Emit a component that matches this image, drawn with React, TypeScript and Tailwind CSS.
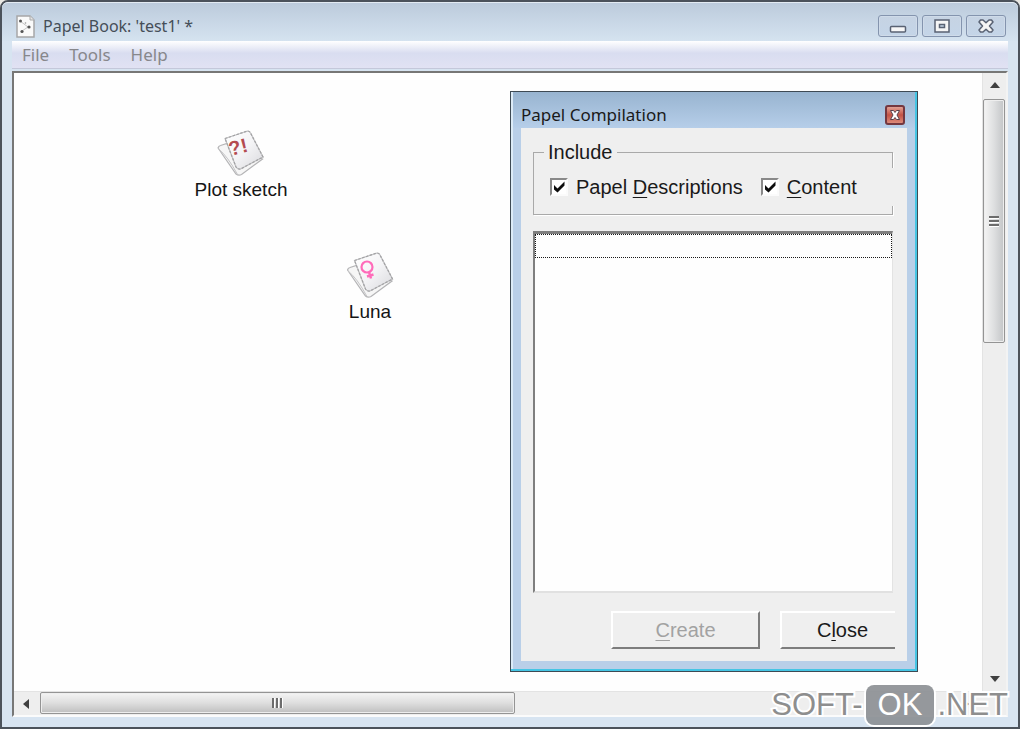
import { useState, type ReactNode } from "react";

function Papel({ label, children, place }: { label: string; children: ReactNode; place: string }) {
  return (
    <button type="button" className={`absolute flex -translate-x-1/2 flex-col items-center ${place}`}>
      <svg width="48" height="48" viewBox="0 0 48 48" aria-hidden="true">
        <defs>
          <linearGradient id={`paper-${label.length}`} x1="0" y1="0" x2="1" y2="1">
            <stop offset="0" stopColor="#ffffff" />
            <stop offset="0.5" stopColor="#f4f4f6" />
            <stop offset="1" stopColor="#d9d9dd" />
          </linearGradient>
        </defs>
        <path d="M1.500 18 Q2 16 4 15.500 L12 13 L44 28 L46 29 L25 44.500 Q22 46 19.500 44 Z" fill="#f6f6f6" stroke="#b4b4b6" strokeWidth="1.200" />
        <path d="M2 19 Q11 26 21 44.500" fill="none" stroke="#c4c4c6" strokeWidth="1" />
        <path d="M8.500 8.500 L31 1 Q33 1 34 3 L46.500 27 L24 39 Q21 39.500 19.500 37 Z" fill={`url(#paper-${label.length})`} stroke="#c2c2c4" strokeWidth="1.200" />
        <path d="M8.500 8.500 L31 1 Q33 1 34 3 L46.500 27 L24 39 Q21 39.500 19.500 37 Z" fill="none" stroke="#a2a2a4" strokeWidth="1.200" strokeDasharray="2.500 1.500" />
        {children}
      </svg>
      <span className="text-[19px] leading-6 whitespace-nowrap text-[#151515]">{label}</span>
    </button>
  );
}

function Key({ children }: { children: string }) {
  return <u className="decoration-1 underline-offset-3">{children}</u>;
}

function Check({ checked, onChange, children }: { checked: boolean; onChange: () => void; children: ReactNode }) {
  return (
    <label className="flex items-center gap-2">
      <span className="relative flex">
        <input
          type="checkbox"
          checked={checked}
          onChange={onChange}
          className="size-[18px] appearance-none border-2 border-t-[#898989] border-r-[#fbfbfb] border-b-[#fbfbfb] border-l-[#898989] bg-white"
        />
        {checked && (
          <svg className="pointer-events-none absolute inset-0" width="18" height="18" viewBox="0 0 18 18" aria-hidden="true">
            <path d="M4 7 L7.500 10.500 L14.500 3.500 V7.500 L7.500 14.500 L4 11.500 Z" fill="#0c0c0c" />
          </svg>
        )}
      </span>
      <span className="text-xl leading-6 whitespace-nowrap">{children}</span>
    </label>
  );
}

function Arrow({ name, points }: { name: string; points: string }) {
  return (
    <button type="button" aria-label={name} className="flex size-6 shrink-0 items-center justify-center">
      <svg width="10" height="10" viewBox="0 0 10 10" aria-hidden="true">
        <polygon points={points} fill="#404040" />
      </svg>
    </button>
  );
}

const caption = "flex h-[22px] w-10 items-center justify-center rounded-[3px] border border-[#8494ae] bg-linear-to-b from-[#c6d3e3] to-[#c4d5e8] shadow-[inset_0_0_0_1px_#cfdbe9]";

export default function App() {
  const [descriptions, setDescriptions] = useState(true);
  const [content, setContent] = useState(true);

  return (
    <div className="h-screen bg-[#e9e8e4] font-['Liberation_Sans',Arial,sans-serif] text-[#1a1a1a]">
      <div className="relative flex h-full flex-col rounded-t-lg border-2 border-[#4b525b] bg-[#d7e4f1] px-2.5 pb-2.5">
        <header className="-mx-2.5 flex h-[39px] shrink-0 items-center justify-between rounded-t-md border-t border-[#e3ebf3] bg-linear-to-b from-[#bccbdc] to-[#d5e3f0] pt-2 pr-3 pl-3.5">
          <div className="flex items-center gap-2">
            <svg width="19" height="23" viewBox="0 0 19 23" aria-hidden="true">
              <path d="M1 1 H14 L18 5 V22 H1 Z" fill="#fafafa" stroke="#a6a7a8" strokeWidth="1.500" />
              <path d="M14 1 V5 H18" fill="#e5e5e5" stroke="#aaa" />
              <path d="M4 6 L12 12 L6 16" fill="none" stroke="#c5c5c5" />
              <g fill="#555"><circle cx="4.500" cy="6" r="1.500" /><circle cx="13" cy="12" r="1.600" /><circle cx="6" cy="16.500" r="1.600" /></g>
              <circle cx="9.500" cy="8" r="0.800" fill="#999" />
            </svg>
            <h1 className="font-['Noto_Sans',sans-serif] text-base leading-6 text-[#454e58]">Papel Book: 'test1' *</h1>
          </div>
          <div className="flex gap-1">
            <button type="button" aria-label="Minimize" className={caption}>
              <svg width="18" height="16" viewBox="0 0 18 16"><rect x="1.500" y="8.500" width="15" height="5.500" rx="1" fill="#f7f7f7" stroke="#596273" strokeWidth="1.500" /></svg>
            </button>
            <button type="button" aria-label="Maximize" className={caption}>
              <svg width="18" height="16" viewBox="0 0 18 16"><path d="M2 2 H16 V14 H2 Z M6.500 6.500 V9.500 H11.500 V6.500 Z" fillRule="evenodd" fill="#f5f5f5" stroke="#596273" strokeWidth="1.500" /></svg>
            </button>
            <button type="button" aria-label="Close window" className={caption}>
              <svg width="18" height="16" viewBox="0 0 18 16"><path d="M3.500 2 H6 L9 4.800 L12 2 H14.500 L16 4 L12.500 8 L16 12 L14.500 14 H12 L9 11.200 L6 14 H3.500 L2 12 L5.500 8 L2 4 Z" fill="#f5f5f5" stroke="#596273" strokeWidth="1.500" strokeLinejoin="round" /></svg>
            </button>
          </div>
        </header>

        <nav className="flex h-[28px] shrink-0 items-center gap-5 border-b border-[#c4c8da] bg-linear-to-b from-white from-0% via-[#d9ddf0] via-45% to-[#e1e2f3] px-2.5 font-['Noto_Sans',sans-serif] text-[17px] leading-6 text-[#87878b]">
          <button type="button">File</button>
          <button type="button">Tools</button>
          <button type="button">Help</button>
        </nav>

        <main className="mt-0.5 flex min-h-0 flex-1 flex-col border-2 border-t-[#777776] border-r-[#f3f3f3] border-b-[#fbfbfb] border-l-[#777776] bg-white">
          <div className="flex min-h-0 flex-1">
            <section className="relative min-w-0 flex-1 bg-[#fefefe]">
              <Papel label="Plot sketch" place="left-[227px] top-[57px]">
                <text x="14" y="26" fontSize="20" fontWeight="bold" fill="#b44b50" transform="rotate(-14 14 26)">?!</text>
              </Papel>
              <Papel label="Luna" place="left-[356px] top-[179px]">
                <circle cx="21" cy="15" r="5.500" fill="none" stroke="#ff6cba" strokeWidth="2.200" />
                <path d="M23 20 L25 26.500 M21 24.500 L27.500 22.500" stroke="#ff6cba" strokeWidth="2.500" />
              </Papel>

              <div role="dialog" aria-labelledby="dialog-title" className="absolute top-[18px] left-[496px] w-[408px] border border-[#3e4a54] bg-[#b9cfe8] px-2.5 pb-2.5 shadow-[inset_-1px_-1px_0_1px_#45c5e4,inset_1px_1px_0_1px_#dcebf7]">
                <div className="-mx-2 flex h-9 items-center justify-between bg-linear-to-b from-[#98b4d0] to-[#b6cee9] pt-2.5 pr-2.5 pl-2">
                  <h2 id="dialog-title" className="font-['Noto_Sans',sans-serif] text-[17px] leading-6">Papel Compilation</h2>
                  <button type="button" aria-label="Close dialog" className="flex size-5 items-center justify-center rounded-[3px] border-2 border-[#743840] bg-linear-to-b from-[#e2a094] via-[#c35245] to-[#dc8a7a]">
                    <svg width="12" height="12" viewBox="0 0 12 12"><path d="M1.500 1.500 H4.500 L6 3.500 L7.500 1.500 H10.500 L8 6 L10.500 10.500 H7.500 L6 8.500 L4.500 10.500 H1.500 L4 6 Z" fill="#fff" stroke="#59424c" /></svg>
                  </button>
                </div>
                <form className="bg-[#efefef] pt-3 pr-3.5 pb-3 pl-3" onSubmit={(e) => e.preventDefault()}>
                  <fieldset className="border border-[#a9a9a9] pb-2 pl-4 shadow-[1px_1px_0_#ffffff]">
                    <legend className="-ml-1.5 px-1 text-xl leading-6">Include</legend>
                    <div className="mt-1 -mr-0.5 flex h-[38px] items-center gap-[18px] bg-[#efefef]">
                      <Check checked={descriptions} onChange={() => setDescriptions(!descriptions)}>Papel <Key>D</Key>escriptions</Check>
                      <Check checked={content} onChange={() => setContent(!content)}><Key>C</Key>ontent</Check>
                    </div>
                  </fieldset>
                  <div role="listbox" aria-label="Compilation items" className="mt-4 h-[362px] border-t-[3px] border-r border-b-2 border-l-2 border-t-[#7f7f7f] border-r-[#e3e3e3] border-b-[#e1e1e1] border-l-[#7f7f7f] bg-[#fefefe]">
                    <div role="option" aria-selected="false" aria-label="Empty" className="h-6 border border-dotted border-[#181818]" />
                  </div>
                  <div className="mt-[18px] flex justify-end gap-5">
                    <button type="button" disabled className="h-[38px] w-[149px] border-2 border-t-white border-r-[#7d7d7d] border-b-[#7d7d7d] border-l-white text-xl leading-6 text-[#a2a2a2]"><Key>C</Key>reate</button>
                    <button type="button" className="-mr-0.5 h-[38px] w-[115px] border-y-2 border-l-2 border-t-white border-b-[#7d7d7d] border-l-white pl-2 text-xl leading-6">C<Key>l</Key>ose</button>
                  </div>
                </form>
              </div>
            </section>

            <aside className="flex w-6 shrink-0 flex-col border-l border-[#e3e3e3] bg-[#eeeeee]">
              <Arrow name="Scroll up" points="5,2 10,8 0,8" />
              <div className="min-h-0 flex-1 pt-0.5">
                <div className="flex h-[43%] w-[22px] flex-col items-center justify-center gap-px rounded-xs border border-[#949494] bg-linear-to-r from-[#f4f4f4] via-[#dedfe0] via-50% to-[#c3c5c7] shadow-[inset_0_0_0_1px_#eeeeee]">
                  <i className="h-[3px] w-2.5 border-t-2 border-b border-t-[#6c6c6c] border-b-white" />
                  <i className="h-[3px] w-2.5 border-t-2 border-b border-t-[#6c6c6c] border-b-white" />
                  <i className="h-[3px] w-2.5 border-t-2 border-b border-t-[#6c6c6c] border-b-white" />
                </div>
              </div>
              <Arrow name="Scroll down" points="0,2 10,2 5,8" />
            </aside>
          </div>

          <div className="flex h-6 shrink-0 border-t border-[#e3e3e3] bg-[#eeeeee]">
            <Arrow name="Scroll left" points="2,5 8,0 8,10" />
            <div className="min-w-0 flex-1 pl-0.5">
              <div className="flex h-[22px] w-[52%] items-center justify-center gap-px rounded-xs border border-[#949494] bg-linear-to-b from-[#f4f4f4] via-[#dedede] via-50% to-[#bfbfbf] shadow-[inset_0_0_0_1px_#eeeeee]">
                <i className="h-2.5 w-[3px] border-r border-l-2 border-r-white border-l-[#6c6c6c]" />
                <i className="h-2.5 w-[3px] border-r border-l-2 border-r-white border-l-[#6c6c6c]" />
                <i className="h-2.5 w-[3px] border-r border-l-2 border-r-white border-l-[#6c6c6c]" />
              </div>
            </div>
            <div className="mr-7 flex"><Arrow name="Scroll right" points="2,0 8,5 2,10" /></div>
          </div>
        </main>

        <div className="pointer-events-none absolute right-2.5 bottom-0.5 flex items-center gap-[3px] text-[31px] leading-10 text-[#8e8e8e] [paint-order:stroke_fill] [-webkit-text-stroke:4px_white]">
          <span>SOFT-</span>
          <span className="rounded-lg bg-[#8b8e92]/90 px-3 text-white shadow-[0_0_0_2px_#ffffff] [-webkit-text-stroke:0px]">OK</span>
          <span>.NET</span>
        </div>
      </div>
    </div>
  );
}
